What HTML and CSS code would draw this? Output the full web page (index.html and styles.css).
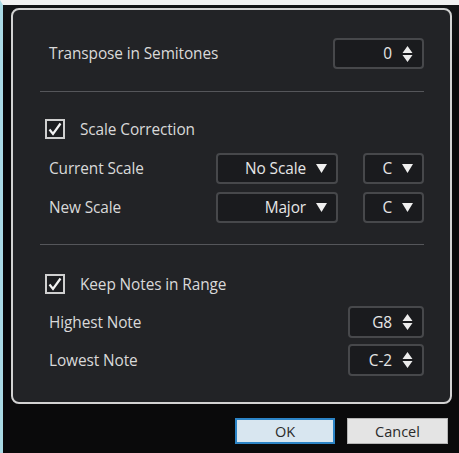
FILE: index.html
```html
<!DOCTYPE html>
<html>
<head>
<meta charset="utf-8">
<link rel="stylesheet" href="styles.css">
</head>
<body>
<div class="frame">
  <div class="panel">
    <div class="row">
      <span class="label">Transpose in Semitones</span>
      <div class="box w91"><span class="val">0</span>
        <svg class="spin" width="11" height="18" viewBox="0 0 11 18"><path d="M5.5 1 L10.5 8 L0.5 8 Z M0.5 10 L10.5 10 L5.5 17 Z" fill="#ececec"/></svg>
      </div>
    </div>
    <div class="sep s1"></div>
    <div class="check-row c1">
      <span class="cb"><svg width="16" height="15" viewBox="0 0 16 15"><path d="M2.5 7.5 L6 12 L13.5 1.5" fill="none" stroke="#f2f2f2" stroke-width="2.2"/></svg></span>
      <span class="clabel">Scale Correction</span>
    </div>
    <div class="row r-cur">
      <span class="label">Current Scale</span>
      <div class="pair">
        <div class="box w122"><span class="val">No Scale</span><svg class="tri" width="11" height="9" viewBox="0 0 11 9"><path d="M0 0 L11 0 L5.5 9 Z" fill="#f0f0f0"/></svg></div>
        <div class="box w61"><span class="val">C</span><svg class="tri" width="11" height="9" viewBox="0 0 11 9"><path d="M0 0 L11 0 L5.5 9 Z" fill="#f0f0f0"/></svg></div>
      </div>
    </div>
    <div class="row r-new">
      <span class="label">New Scale</span>
      <div class="pair">
        <div class="box w122"><span class="val">Major</span><svg class="tri" width="11" height="9" viewBox="0 0 11 9"><path d="M0 0 L11 0 L5.5 9 Z" fill="#f0f0f0"/></svg></div>
        <div class="box w61"><span class="val">C</span><svg class="tri" width="11" height="9" viewBox="0 0 11 9"><path d="M0 0 L11 0 L5.5 9 Z" fill="#f0f0f0"/></svg></div>
      </div>
    </div>
    <div class="sep s2"></div>
    <div class="check-row c2">
      <span class="cb"><svg width="16" height="15" viewBox="0 0 16 15"><path d="M2.5 7.5 L6 12 L13.5 1.5" fill="none" stroke="#f2f2f2" stroke-width="2.2"/></svg></span>
      <span class="clabel">Keep Notes in Range</span>
    </div>
    <div class="row tall r-hi">
      <span class="label">Highest Note</span>
      <div class="box w76"><span class="val">G8</span>
        <svg class="spin" width="11" height="18" viewBox="0 0 11 18"><path d="M5.5 1 L10.5 8 L0.5 8 Z M0.5 10 L10.5 10 L5.5 17 Z" fill="#ececec"/></svg>
      </div>
    </div>
    <div class="row tall r-lo">
      <span class="label">Lowest Note</span>
      <div class="box w76"><span class="val">C-2</span>
        <svg class="spin" width="11" height="18" viewBox="0 0 11 18"><path d="M5.5 1 L10.5 8 L0.5 8 Z M0.5 10 L10.5 10 L5.5 17 Z" fill="#ececec"/></svg>
      </div>
    </div>
  </div>
  <div class="buttons">
    <div class="btn ok">OK</div>
    <div class="btn cancel">Cancel</div>
  </div>
</div>
</body>
</html>
```
FILE: styles.css
```css
html, body {
  margin: 0;
  padding: 0;
  background: #0b0b0c;
}
body {
  width: 459px;
  height: 453px;
  overflow: hidden;
  font-family: "Open Sans", "Noto Sans", sans-serif;
}
.frame {
  box-sizing: border-box;
  width: 459px;
  height: 453px;
  border-top: 5px solid #f1f1f1;
  border-left: 3px solid #a9d9e4;
  background: linear-gradient(#131416 0, #0a0a0b 60px);
  padding-top: 3px;
}
.panel {
  box-sizing: border-box;
  margin-left: 8px;
  width: 441px;
  height: 396px;
  border: 2px solid #d2d2d2;
  border-radius: 8px;
  background: #222326;
  padding: 28px 26px 0 27px;
  color: #d9d9d9;
  font-size: 15.4px;
  font-weight: 500;
  letter-spacing: -0.1px;
}
.row {
  display: flex;
  align-items: center;
  justify-content: space-between;
  height: 31px;
}
.row.tall { height: 32px; }
.label {
  padding-left: 9px;
}
.box {
  box-sizing: border-box;
  height: 100%;
  border: 2px solid #47484b;
  border-radius: 4px;
  background: #1a1b1e;
  display: flex;
  align-items: center;
  justify-content: flex-end;
  padding-right: 9px;
  color: #e6e6e6;
}
.w91 { width: 91px; }
.w76 { width: 76px; }
.w122 { width: 122px; }
.w61 { width: 61px; }
.pair {
  display: flex;
  gap: 25px;
  height: 100%;
}
.val { margin-right: 10px; }
.spin { display: block; }
.tri { display: block; }
.sep {
  height: 1px;
  background: #55565a;
}
.s1 { margin-top: 22px; }
.s2 { margin-top: 21px; }
.check-row {
  display: flex;
  align-items: center;
  height: 20px;
}
.c1 { margin-top: 27px; }
.c2 { margin-top: 29px; }
.cb {
  box-sizing: border-box;
  width: 20px;
  height: 20px;
  margin-left: 5px;
  border: 2px solid #cfcfcf;
  background: #1c1d20;
  display: flex;
  align-items: center;
  justify-content: center;
}
.cb svg { display: block; }
.clabel { margin-left: 15px; }
.r-cur { margin-top: 14px; }
.r-new { margin-top: 8px; }
.r-hi { margin-top: 12px; }
.r-lo { margin-top: 6px; }
.buttons {
  display: flex;
  justify-content: flex-end;
  gap: 12px;
  margin-top: 14px;
  margin-right: 11px;
}
.btn {
  box-sizing: border-box;
  height: 26px;
  display: flex;
  align-items: center;
  justify-content: center;
  font-size: 14.5px;
  color: #2a2a2a;
}
.ok {
  width: 100px;
  background: #d8e6f0;
  border: 2px solid #2c84c6;
}
.cancel {
  width: 101px;
  background: #e4e4e4;
  border: 1px solid #b5b5b5;
}
```
